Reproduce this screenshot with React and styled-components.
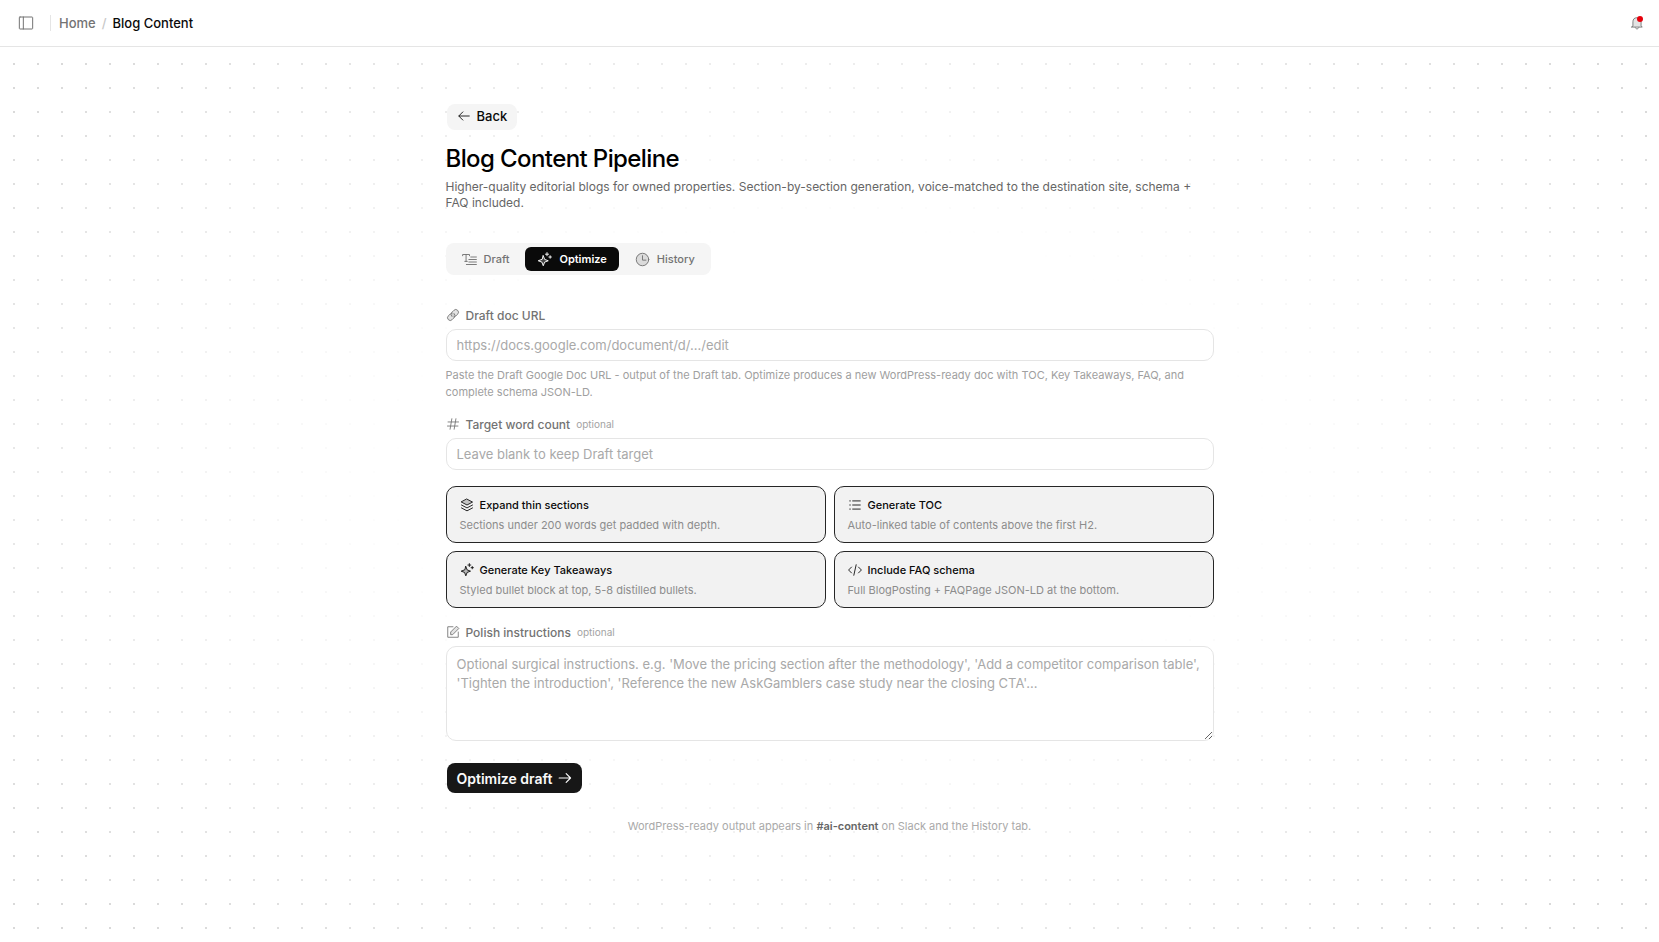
import React from "react";
import styled, { createGlobalStyle, css } from "styled-components";

const GlobalStyle = createGlobalStyle`
  *, *::before, *::after { box-sizing: border-box; }
  body {
    margin: 0;
    background: #fff;
    color: #0a0a0a;
    font-family: Inter, "Liberation Sans", sans-serif;
    font-size: 13px;
  }
  button, input, textarea { font: inherit; color: inherit; }
  h1, p { margin: 0; }
`;

const Page = styled.div`
  display: flex;
  flex-direction: column;
  min-height: 100vh;
  background:
    radial-gradient(ellipse at center, #fff 36%, rgba(255, 255, 255, 0) 90%),
    radial-gradient(circle, #d9d9d9 1px, transparent 1px) 2px 4px / 24px 24px;
`;

const TopBar = styled.header`
  display: flex;
  align-items: center;
  justify-content: space-between;
  height: 47px;
  padding: 0 12px 0 16px;
  background: #fff;
  border-bottom: 1px solid #e5e5e5;
`;

const TopGroup = styled.div`
  display: flex;
  align-items: center;
`;

const IconButton = styled.button`
  position: relative;
  display: grid;
  place-items: center;
  width: 20px;
  height: 20px;
  padding: 0;
  border: 0;
  background: none;
  color: #737373;
`;

const UnreadDot = styled.span`
  position: absolute;
  top: 3px;
  right: 4px;
  width: 6px;
  height: 6px;
  border-radius: 50%;
  background: #e7000b;
`;

const Divider = styled.span`
  width: 1px;
  height: 16px;
  margin: 0 8px 0 14px;
  background: #e5e5e5;
`;

const Crumbs = styled.nav`
  display: flex;
  gap: 6px;
  font-weight: 500;
  line-height: 20px;
`;

const CrumbLink = styled.a`
  color: #737373;
  text-decoration: none;
`;

const CrumbSlash = styled.span`
  color: #c8c8c8;
`;

const Main = styled.main`
  display: flex;
  flex-direction: column;
  width: 100%;
  max-width: 768px;
  margin: 0 auto;
  padding: 56px 0 64px;
`;

const solidButton = css`
  display: flex;
  align-items: center;
  align-self: flex-start;
  border: 1px solid transparent;
  border-radius: 9px;
  background-clip: padding-box;
`;

const BackButton = styled.button`
  ${solidButton}
  gap: 6px;
  height: 28px;
  padding: 0 10px 2px;
  background-color: #f5f5f5;
  font-weight: 500;
`;

const Title = styled.h1`
  margin-top: 12px;
  font-size: 24px;
  font-weight: 500;
  line-height: 32px;
  letter-spacing: -0.025em;
  color: #000;
`;

const Lead = styled.p`
  margin-top: 4px;
  font-size: 12px;
  line-height: 16px;
  color: #666;
`;

const Tabs = styled.div`
  display: flex;
  align-self: flex-start;
  gap: 4px;
  margin-top: 32px;
  padding: 4px;
  border-radius: 8px;
  background: #f5f5f5;
`;

const Tab = styled.button`
  display: flex;
  align-items: center;
  gap: 7px;
  height: 24px;
  padding: 0 12px;
  border: 0;
  border-radius: 6px;
  background: none;
  color: #737373;
  font-size: 11px;
  font-weight: 500;
  ${(p) => p.$active && css`
    background: #0a0a0a;
    color: #fff;
    font-weight: 600;
  `}
`;

const Form = styled.form`
  display: flex;
  flex-direction: column;
  margin-top: 32px;
`;

const Field = styled.div`
  display: flex;
  flex-direction: column;
  gap: 6px;
  margin-bottom: 16px;
`;

const FieldLabel = styled.label`
  display: flex;
  align-items: center;
  gap: 6px;
  height: 16px;
  font-size: 12px;
  font-weight: 500;
  color: #737373;
`;

const Optional = styled.span`
  font-size: 10px;
  font-weight: 400;
  color: #a3a3a3;
`;

const control = css`
  width: 100%;
  border: 1px solid #e5e5e5;
  border-radius: 10px;
  background: #fff;
  outline: none;
  font-size: 13px;
  &::placeholder { color: #a9a9a9; opacity: 1; }
`;

const TextInput = styled.input`
  ${control}
  height: 32px;
  padding: 0 10px;
`;

const TextArea = styled.textarea`
  ${control}
  display: block;
  height: 95px;
  padding: 8px 10px;
  line-height: 19px;
  resize: vertical;
`;

const Hint = styled.p`
  margin-bottom: -1px;
  font-size: 11px;
  line-height: 17px;
  color: #a0a0a0;
`;

const Options = styled.div`
  display: grid;
  grid-template-columns: 1fr 1fr;
  gap: 8px;
  margin-bottom: 16px;
`;

const OptionCard = styled.button`
  display: flex;
  flex-direction: column;
  gap: 4px;
  padding: 10px 13px 9px;
  border: 1px solid #262626;
  border-radius: 10px;
  background: #f2f2f2;
  text-align: left;
`;

const OptionTitle = styled.span`
  display: flex;
  align-items: center;
  gap: 6px;
  font-size: 11px;
  font-weight: 500;
  line-height: 16px;
`;

const OptionText = styled.span`
  font-size: 11px;
  line-height: 16px;
  color: #8c8c8c;
`;

const Submit = styled.button`
  ${solidButton}
  gap: 6px;
  height: 32px;
  margin-top: 5px;
  padding: 0 10px;
  background-color: #171717;
  color: #fafafa;
  font-size: 14px;
  font-weight: 600;
`;

const Footnote = styled.p`
  margin-top: 24px;
  font-size: 11px;
  line-height: 16px;
  text-align: center;
  color: #a9a9a9;
  strong { font-weight: 600; color: #666; }
`;

const shapes = {
  sidebar: <><rect x="2" y="3" width="20" height="18" rx="1" /><path d="M8 3v18" /></>,
  bell: <><path d="M5 17V10a7 7 0 0 1 14 0v7l2 2H3z" fill="currentColor" fillOpacity=".2" /><path d="M9 20c1 3 5 3 6 0" /></>,
  left: <path d="M21 12H3.500M10 5l-7 7 7 7" />,
  right: <path d="M2 12h19M14 4.500l7.500 7.500-7.500 7.500" />,
  draft: <><path d="M1 6V4h11v2M6.500 4v11M4.500 15h4M14 8h9M11 12h12M11 16h12M7 20h16" /></>,
  spark: <><path d="M10 6l2.200 5.800L18 14l-5.800 2.200L10 22l-2.200-5.800L2 14l5.800-2.200z" fill="currentColor" fillOpacity=".25" /><path d="M16 1v5M13.500 3.500h5M21 6v4M19 8h4" /></>,
  clock: <><circle cx="12" cy="12" r="10" fill="currentColor" fillOpacity=".2" /><path d="M12 6v7h5.500" /></>,
  link: <><path d="M10 14.500a5 5 0 0 1 0-7L13.500 4a4.500 4.500 0 0 1 6.500 6.500L16.500 14a5 5 0 0 1-3 1.500" fill="currentColor" fillOpacity=".2" /><path d="M14 9.500a5 5 0 0 1 0 7L10.500 20A4.500 4.500 0 0 1 4 13.500L7.500 10a5 5 0 0 1 3-1.500" fill="currentColor" fillOpacity=".2" /></>,
  hash: <path d="M10 3L7 21M17 3l-3 18M3.500 8.500h18M2.500 15.500h18" />,
  layers: <><path d="M12 2l9.500 5L12 12 2.500 7z" fill="currentColor" fillOpacity=".2" /><path d="M2.500 12l9.500 5 9.500-5M2.500 17l9.500 5 9.500-5" /></>,
  list: <path d="M8 5h13M8 12h13M8 19h13M3 5h1M3 12h1M3 19h1" />,
  code: <path d="M6 7l-5 5 5 5M18 7l5 5-5 5M14 3l-4 18" />,
  edit: <><path d="M12 3H3v18h18v-9" /><path d="M8 16v-4l10-10 4 4-10 10z" fill="currentColor" fillOpacity=".2" /></>,
};

function Icon({ name, size = 14, weight = 1.5 }) {
  return (
    <svg width={size} height={size} viewBox="0 0 24 24" fill="none" stroke="currentColor"
      strokeWidth={weight} strokeLinejoin="round" strokeLinecap="round" aria-hidden="true">
      {shapes[name]}
    </svg>
  );
}

const tabs = [
  { icon: "draft", label: "Draft" },
  { icon: "spark", label: "Optimize", active: true },
  { icon: "clock", label: "History" },
];

const options = [
  { icon: "layers", title: "Expand thin sections", text: "Sections under 200 words get padded with depth." },
  { icon: "list", title: "Generate TOC", text: "Auto-linked table of contents above the first H2." },
  { icon: "spark", title: "Generate Key Takeaways", text: "Styled bullet block at top, 5-8 distilled bullets." },
  { icon: "code", title: "Include FAQ schema", text: "Full BlogPosting + FAQPage JSON-LD at the bottom." },
];

export default function App() {
  return (
    <>
      <GlobalStyle />
      <Page>
        <TopBar>
          <TopGroup>
            <IconButton aria-label="Toggle sidebar"><Icon name="sidebar" size={16} /></IconButton>
            <Divider />
            <Crumbs aria-label="Breadcrumb">
              <CrumbLink href="#home">Home</CrumbLink>
              <CrumbSlash>/</CrumbSlash>
              <span aria-current="page">Blog Content</span>
            </Crumbs>
          </TopGroup>
          <IconButton aria-label="Notifications"><Icon name="bell" /><UnreadDot /></IconButton>
        </TopBar>
        <Main>
          <BackButton type="button"><Icon name="left" />Back</BackButton>
          <Title>Blog Content Pipeline</Title>
          <Lead>
            Higher-quality editorial blogs for owned properties. Section-by-section generation,
            voice-matched to the destination site, schema + FAQ included.
          </Lead>
          <Tabs role="tablist">
            {tabs.map((t) => (
              <Tab key={t.label} type="button" role="tab" aria-selected={!!t.active} $active={t.active}>
                <Icon name={t.icon} size={15} />{t.label}
              </Tab>
            ))}
          </Tabs>
          <Form onSubmit={(e) => e.preventDefault()}>
            <Field>
              <FieldLabel htmlFor="doc"><Icon name="link" />Draft doc URL</FieldLabel>
              <TextInput id="doc" type="url" placeholder="https://docs.google.com/document/d/.../edit" />
              <Hint>
                Paste the Draft Google Doc URL - output of the Draft tab. Optimize produces a new
                WordPress-ready doc with TOC, Key Takeaways, FAQ, and complete schema JSON-LD.
              </Hint>
            </Field>
            <Field>
              <FieldLabel htmlFor="words"><Icon name="hash" />Target word count<Optional>optional</Optional></FieldLabel>
              <TextInput id="words" inputMode="numeric" placeholder="Leave blank to keep Draft target" />
            </Field>
            <Options>
              {options.map((o) => (
                <OptionCard key={o.title} type="button" aria-pressed="true">
                  <OptionTitle><Icon name={o.icon} />{o.title}</OptionTitle>
                  <OptionText>{o.text}</OptionText>
                </OptionCard>
              ))}
            </Options>
            <Field>
              <FieldLabel htmlFor="polish"><Icon name="edit" />Polish instructions<Optional>optional</Optional></FieldLabel>
              <TextArea id="polish" placeholder="Optional surgical instructions. e.g. 'Move the pricing section after the methodology', 'Add a competitor comparison table', 'Tighten the introduction', 'Reference the new AskGamblers case study near the closing CTA'..." />
            </Field>
            <Submit type="submit">Optimize draft<Icon name="right" weight={2} /></Submit>
          </Form>
          <Footnote>
            WordPress-ready output appears in <strong>#ai-content</strong> on Slack and the History tab.
          </Footnote>
        </Main>
      </Page>
    </>
  );
}
